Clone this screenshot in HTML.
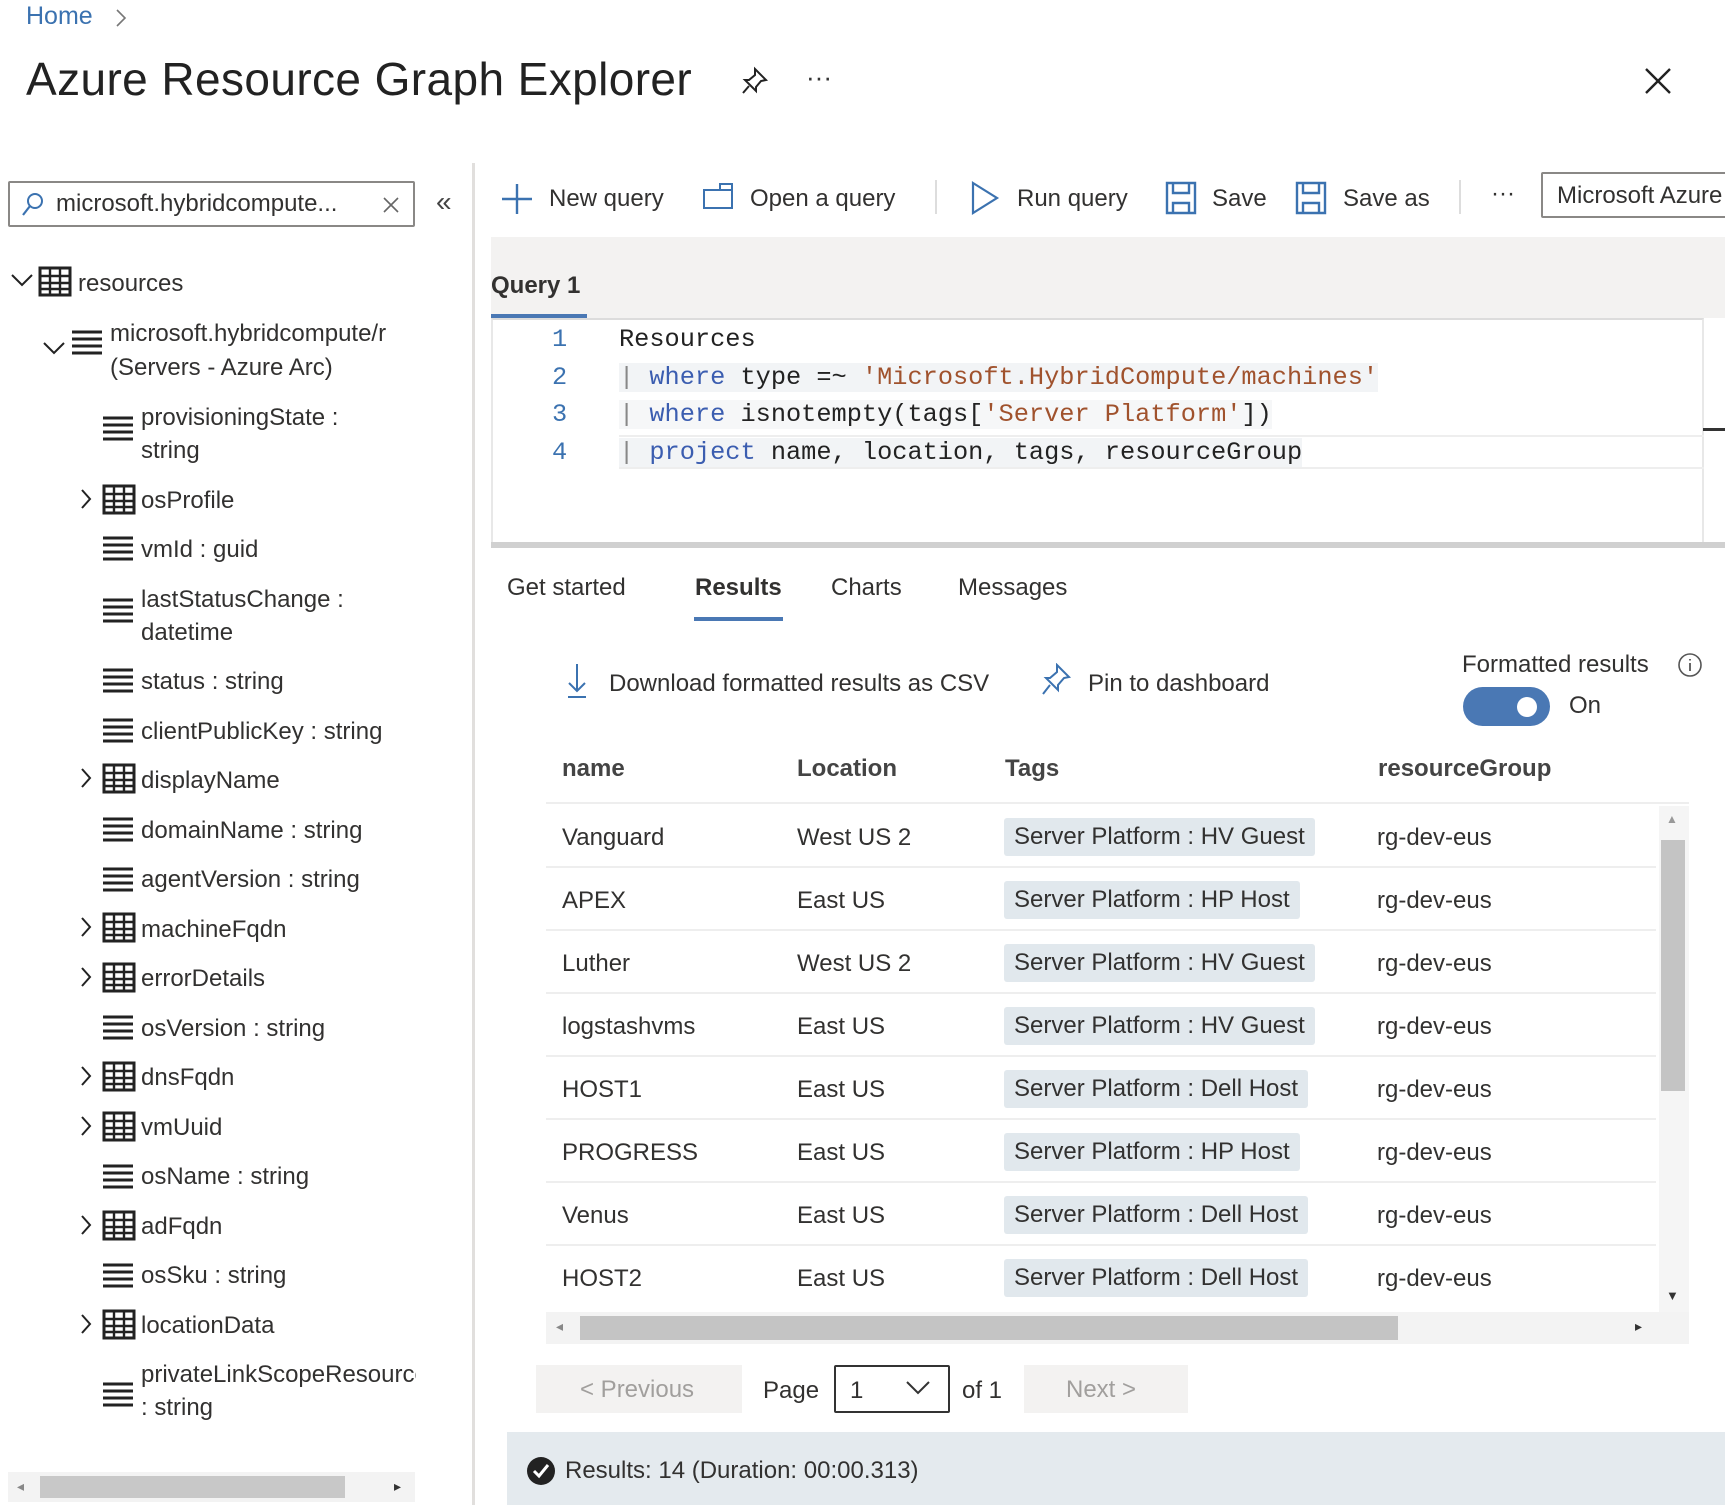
<!DOCTYPE html>
<html><head><meta charset="utf-8"><style>
*{margin:0;padding:0;box-sizing:border-box}
body{width:1725px;height:1505px;position:relative;overflow:hidden;background:#fff;font-family:"Liberation Sans",sans-serif;color:#323130}
.a{position:absolute;white-space:nowrap}
.t{font-size:24px}
.mono{font-family:"Liberation Mono",monospace;font-size:25.3px}
.ico{position:absolute}
.row{position:absolute;left:546px;width:1110px;height:63px;border-bottom:2px solid #eeeeee}
.chip{position:absolute;background:#e1e8ed;border-radius:3px;height:38px;padding:0 10px;line-height:38px;font-size:24px}
</style></head><body>

<div class="a" style="left:26px;top:2px;font-size:25px;color:#3b72b0">Home</div>
<svg class="ico" style="left:114px;top:8px" width="14" height="20"><path d="M3 2 L11 10 L3 18" fill="none" stroke="#777" stroke-width="1.6"/></svg>
<div class="a" style="left:26px;top:52px;font-size:46px;letter-spacing:0.4px;color:#222">Azure Resource Graph Explorer</div>
<svg class="ico" style="left:740px;top:66px" width="30" height="30"><path d="M15 3 L26 14 L21 15 L16 21 L16 25 L5 14 L9 14 L15 9 Z M9 20 L3 27" fill="none" stroke="#222" stroke-width="2"/></svg>
<div class="a" style="left:806px;top:62px;font-size:26px;color:#333">···</div>
<svg class="ico" style="left:1644px;top:67px" width="28" height="28"><path d="M2 2 L26 26 M26 2 L2 26" stroke="#222" stroke-width="2.4"/></svg>

<!-- left panel -->
<div class="a" style="left:8px;top:181px;width:407px;height:46px;border:2px solid #8a8886;border-radius:2px"></div>
<svg class="ico" style="left:20px;top:192px" width="24" height="26"><circle cx="15" cy="9" r="7" fill="none" stroke="#3b72b0" stroke-width="2"/><path d="M10 14 L3 23" stroke="#3b72b0" stroke-width="2.2"/></svg>
<div class="a t" style="left:56px;top:190px">microsoft.hybridcompute...</div>
<svg class="ico" style="left:382px;top:196px" width="18" height="18"><path d="M2 2 L16 16 M16 2 L2 16" stroke="#666" stroke-width="1.6"/></svg>
<div class="a" style="left:436px;top:186px;font-size:28px;color:#444">«</div>
<div class="a" style="left:472px;top:163px;width:3px;height:1342px;background:#e1dfdd"></div>

<svg class="ico" style="left:0;top:260px" width="440" height="1200">
<defs>
<g id="tb"><rect x="0" y="0" width="30" height="27" fill="none" stroke="#222" stroke-width="3"/><path d="M0 8 H30 M0 15 H30 M0 21 H30 M10 0 V27 M20 0 V27" stroke="#222" stroke-width="2.4"/></g>
<g id="ls"><path d="M0 2 H30 M0 9 H30 M0 16 H30 M0 23 H30" stroke="#222" stroke-width="3"/></g>
<path id="cr" d="M0 0 L8 9 L0 18" fill="none" stroke="#222" stroke-width="2"/>
<path id="cd" d="M0 0 L10 10 L20 0" fill="none" stroke="#222" stroke-width="2"/>
</defs>
<use href="#cd" x="12" y="15"/><use href="#tb" x="40" y="8"/>
<use href="#cd" x="44" y="83"/><use href="#ls" x="72" y="70"/>
<use href="#ls" x="103" y="156"/>
<use href="#cr" x="82" y="230"/><use href="#tb" x="104" y="226"/>
<use href="#ls" x="103" y="276"/>
<use href="#ls" x="103" y="338"/>
<use href="#ls" x="103" y="408"/>
<use href="#ls" x="103" y="458"/>
<use href="#cr" x="82" y="509"/><use href="#tb" x="104" y="505"/>
<use href="#ls" x="103" y="557"/>
<use href="#ls" x="103" y="607"/>
<use href="#cr" x="82" y="658"/><use href="#tb" x="104" y="654"/>
<use href="#cr" x="82" y="708"/><use href="#tb" x="104" y="704"/>
<use href="#ls" x="103" y="755"/>
<use href="#cr" x="82" y="807"/><use href="#tb" x="104" y="803"/>
<use href="#cr" x="82" y="857"/><use href="#tb" x="104" y="853"/>
<use href="#ls" x="103" y="904"/>
<use href="#cr" x="82" y="956"/><use href="#tb" x="104" y="952"/>
<use href="#ls" x="103" y="1003"/>
<use href="#cr" x="82" y="1055"/><use href="#tb" x="104" y="1051"/>
<use href="#ls" x="103" y="1122"/>
</svg>
<div class="a t" style="left:78px;top:270px">resources</div>
<div class="a t" style="left:110px;top:320px">microsoft.hybridcompute/r</div>
<div class="a t" style="left:110px;top:354px">(Servers - Azure Arc)</div>
<div class="a t" style="left:141px;top:404px">provisioningState :</div>
<div class="a t" style="left:141px;top:437px">string</div>
<div class="a t" style="left:141px;top:487px">osProfile</div>
<div class="a t" style="left:141px;top:536px">vmId : guid</div>
<div class="a t" style="left:141px;top:586px">lastStatusChange :</div>
<div class="a t" style="left:141px;top:619px">datetime</div>
<div class="a t" style="left:141px;top:668px">status : string</div>
<div class="a t" style="left:141px;top:718px">clientPublicKey : string</div>
<div class="a t" style="left:141px;top:767px">displayName</div>
<div class="a t" style="left:141px;top:817px">domainName : string</div>
<div class="a t" style="left:141px;top:866px">agentVersion : string</div>
<div class="a t" style="left:141px;top:916px">machineFqdn</div>
<div class="a t" style="left:141px;top:965px">errorDetails</div>
<div class="a t" style="left:141px;top:1015px">osVersion : string</div>
<div class="a t" style="left:141px;top:1064px">dnsFqdn</div>
<div class="a t" style="left:141px;top:1114px">vmUuid</div>
<div class="a t" style="left:141px;top:1163px">osName : string</div>
<div class="a t" style="left:141px;top:1213px">adFqdn</div>
<div class="a t" style="left:141px;top:1262px">osSku : string</div>
<div class="a t" style="left:141px;top:1312px">locationData</div>
<div class="a t" style="left:141px;top:1361px;width:275px;overflow:hidden">privateLinkScopeResource</div>
<div class="a t" style="left:141px;top:1394px">: string</div>
<div class="a" style="left:8px;top:1472px;width:407px;height:30px;background:#f3f3f3"></div>
<div class="a" style="left:40px;top:1476px;width:305px;height:22px;background:#c8c8c8"></div>
<div class="a" style="left:17px;top:1478px;font-size:14px;color:#888">◂</div>
<div class="a" style="left:394px;top:1478px;font-size:14px;color:#333">▸</div>

<!-- toolbar -->
<svg class="ico" style="left:501px;top:183px" width="32" height="32"><path d="M16 1 V31 M1 16 H31" stroke="#3b72b0" stroke-width="2.4"/></svg>
<div class="a t" style="left:549px;top:185px">New query</div>
<svg class="ico" style="left:702px;top:182px" width="32" height="28"><path d="M2 8 H30 V26 H2 Z M18 8 V2 H30 V8" fill="none" stroke="#3b72b0" stroke-width="2"/></svg>
<div class="a t" style="left:750px;top:185px">Open a query</div>
<div class="a" style="left:935px;top:180px;width:2px;height:34px;background:#ddd"></div>
<svg class="ico" style="left:970px;top:181px" width="30" height="34"><path d="M3 2 L27 17 L3 32 Z" fill="none" stroke="#3b72b0" stroke-width="2.2"/></svg>
<div class="a t" style="left:1017px;top:185px">Run query</div>
<svg class="ico" style="left:1165px;top:181px" width="32" height="34"><path d="M2 2 H30 V32 H2 Z M8 2 V12 H24 V2 M8 32 V22 H24 V32" fill="none" stroke="#3b72b0" stroke-width="2.4"/></svg>
<div class="a t" style="left:1212px;top:185px">Save</div>
<svg class="ico" style="left:1295px;top:181px" width="32" height="34"><path d="M2 2 H30 V32 H2 Z M8 2 V12 H24 V2 M8 32 V22 H24 V32" fill="none" stroke="#3b72b0" stroke-width="2.4"/></svg>
<div class="a t" style="left:1343px;top:185px">Save as</div>
<div class="a" style="left:1459px;top:180px;width:2px;height:34px;background:#ddd"></div>
<div class="a" style="left:1491px;top:180px;font-size:24px">···</div>
<div class="a" style="left:1541px;top:172px;width:190px;height:46px;border:2px solid #8a8886;border-radius:2px"></div>
<div class="a t" style="left:1557px;top:182px">Microsoft Azure</div>

<!-- query area -->
<div class="a" style="left:491px;top:237px;width:1234px;height:81px;background:#f3f2f1"></div>
<div class="a t" style="left:491px;top:272px;font-weight:bold;color:#323130">Query 1</div>
<div class="a" style="left:491px;top:314px;width:96px;height:4px;background:#4a78b4"></div>
<div class="a" style="left:491px;top:318px;width:1213px;height:226px;border:2px solid #e8e8e8;border-top:2px solid #dcdcdc;background:#fff"></div>
<div class="a" style="left:491px;top:542px;width:1234px;height:6px;background:#d0d0d0"></div>
<div class="a" style="left:619px;top:435px;width:1085px;height:34px;border-top:2px solid #eee;border-bottom:2px solid #eee"></div>
<div class="a" style="left:1703px;top:428px;width:22px;height:3px;background:#333"></div>
<div class="a mono" style="left:552px;top:325px;color:#3b72b0">1</div>
<div class="a mono" style="left:552px;top:363px;color:#3b72b0">2</div>
<div class="a mono" style="left:552px;top:400px;color:#3b72b0">3</div>
<div class="a mono" style="left:552px;top:438px;color:#3b72b0">4</div>
<div class="a mono" style="left:619px;top:325px;color:#222">Resources</div>
<div class="a mono" style="left:619px;top:363px;color:#222;background:#f2f4f6"><span style="color:#888">|</span> <span style="color:#3b5db0">where</span> type =~ <span style="color:#a0522d">'Microsoft.HybridCompute/machines'</span></div>
<div class="a mono" style="left:619px;top:400px;color:#222;background:#f6f7f8"><span style="color:#888">|</span> <span style="color:#3b5db0">where</span> isnotempty(tags[<span style="color:#a0522d">'Server Platform'</span>])</div>
<div class="a mono" style="left:619px;top:438px;color:#222;background:#f2f4f6"><span style="color:#888">|</span> <span style="color:#3b5db0">project</span> name, location, tags, resourceGroup</div>

<!-- tabs -->
<div class="a t" style="left:507px;top:574px">Get started</div>
<div class="a t" style="left:695px;top:574px;font-weight:bold">Results</div>
<div class="a" style="left:694px;top:617px;width:89px;height:4px;background:#4a78b4"></div>
<div class="a t" style="left:831px;top:574px">Charts</div>
<div class="a t" style="left:958px;top:574px">Messages</div>

<svg class="ico" style="left:565px;top:663px" width="24" height="36"><path d="M12 1 V28 M4 20 L12 28 L20 20 M3 34 H21" fill="none" stroke="#3b72b0" stroke-width="2"/></svg>
<div class="a t" style="left:609px;top:670px">Download formatted results as CSV</div>
<svg class="ico" style="left:1040px;top:663px" width="32" height="34"><path d="M17 2 L29 14 L24 15 L18 22 L18 27 L6 15 L10 15 L17 9 Z M10 22 L3 31" fill="none" stroke="#3b72b0" stroke-width="2"/></svg>
<div class="a t" style="left:1088px;top:670px">Pin to dashboard</div>
<div class="a t" style="left:1462px;top:651px">Formatted results</div>
<svg class="ico" style="left:1677px;top:652px" width="26" height="26"><circle cx="13" cy="13" r="11" fill="none" stroke="#555" stroke-width="1.6"/><path d="M13 11 V19 M13 7 V8.5" stroke="#555" stroke-width="1.8"/></svg>
<div class="a" style="left:1463px;top:687px;width:87px;height:39px;border-radius:20px;background:#4a78b4"></div>
<div class="a" style="left:1517px;top:697px;width:20px;height:20px;border-radius:10px;background:#fff"></div>
<div class="a t" style="left:1569px;top:692px">On</div>

<!-- table -->
<div class="a t" style="left:562px;top:755px;font-weight:bold;color:#444">name</div>
<div class="a t" style="left:797px;top:755px;font-weight:bold;color:#444">Location</div>
<div class="a t" style="left:1005px;top:755px;font-weight:bold;color:#444">Tags</div>
<div class="a t" style="left:1378px;top:755px;font-weight:bold;color:#444">resourceGroup</div>
<div class="a" style="left:546px;top:802px;width:1143px;height:2px;background:#eee"></div>

<div class="row" style="top:805px"></div>
<div class="row" style="top:868px"></div>
<div class="row" style="top:931px"></div>
<div class="row" style="top:994px"></div>
<div class="row" style="top:1057px"></div>
<div class="row" style="top:1120px"></div>
<div class="row" style="top:1183px"></div>

<div class="a t" style="left:562px;top:824px">Vanguard</div><div class="a t" style="left:797px;top:824px">West US 2</div><div class="chip" style="left:1004px;top:818px">Server Platform : HV Guest</div><div class="a t" style="left:1377px;top:824px">rg-dev-eus</div>
<div class="a t" style="left:562px;top:887px">APEX</div><div class="a t" style="left:797px;top:887px">East US</div><div class="chip" style="left:1004px;top:881px">Server Platform : HP Host</div><div class="a t" style="left:1377px;top:887px">rg-dev-eus</div>
<div class="a t" style="left:562px;top:950px">Luther</div><div class="a t" style="left:797px;top:950px">West US 2</div><div class="chip" style="left:1004px;top:944px">Server Platform : HV Guest</div><div class="a t" style="left:1377px;top:950px">rg-dev-eus</div>
<div class="a t" style="left:562px;top:1013px">logstashvms</div><div class="a t" style="left:797px;top:1013px">East US</div><div class="chip" style="left:1004px;top:1007px">Server Platform : HV Guest</div><div class="a t" style="left:1377px;top:1013px">rg-dev-eus</div>
<div class="a t" style="left:562px;top:1076px">HOST1</div><div class="a t" style="left:797px;top:1076px">East US</div><div class="chip" style="left:1004px;top:1070px">Server Platform : Dell Host</div><div class="a t" style="left:1377px;top:1076px">rg-dev-eus</div>
<div class="a t" style="left:562px;top:1139px">PROGRESS</div><div class="a t" style="left:797px;top:1139px">East US</div><div class="chip" style="left:1004px;top:1133px">Server Platform : HP Host</div><div class="a t" style="left:1377px;top:1139px">rg-dev-eus</div>
<div class="a t" style="left:562px;top:1202px">Venus</div><div class="a t" style="left:797px;top:1202px">East US</div><div class="chip" style="left:1004px;top:1196px">Server Platform : Dell Host</div><div class="a t" style="left:1377px;top:1202px">rg-dev-eus</div>
<div class="a t" style="left:562px;top:1265px">HOST2</div><div class="a t" style="left:797px;top:1265px">East US</div><div class="chip" style="left:1004px;top:1259px">Server Platform : Dell Host</div><div class="a t" style="left:1377px;top:1265px">rg-dev-eus</div>

<!-- scrollbars -->
<div class="a" style="left:1659px;top:806px;width:30px;height:508px;background:#f5f5f5"></div>
<div class="a" style="left:1661px;top:840px;width:24px;height:251px;background:#c4c4c4"></div>
<div class="a" style="left:1666px;top:812px;font-size:12px;color:#999">▲</div>
<div class="a" style="left:1666px;top:1288px;font-size:13px;color:#333">▼</div>
<div class="a" style="left:546px;top:1312px;width:1143px;height:32px;background:#f3f3f3"></div>
<div class="a" style="left:580px;top:1316px;width:818px;height:24px;background:#c4c4c4"></div>
<div class="a" style="left:556px;top:1318px;font-size:14px;color:#888">◂</div>
<div class="a" style="left:1635px;top:1318px;font-size:14px;color:#333">▸</div>

<!-- pagination -->
<div class="a" style="left:536px;top:1365px;width:206px;height:48px;background:#f3f2f1"></div>
<div class="a t" style="left:580px;top:1376px;color:#a19f9d">&lt; Previous</div>
<div class="a t" style="left:763px;top:1377px">Page</div>
<div class="a" style="left:834px;top:1365px;width:116px;height:48px;border:2px solid #333;border-radius:2px"></div>
<div class="a t" style="left:850px;top:1377px">1</div>
<svg class="ico" style="left:905px;top:1380px" width="26" height="16"><path d="M2 2 L13 13 L24 2" fill="none" stroke="#333" stroke-width="2"/></svg>
<div class="a t" style="left:962px;top:1377px">of 1</div>
<div class="a" style="left:1024px;top:1365px;width:164px;height:48px;background:#f3f2f1"></div>
<div class="a t" style="left:1066px;top:1376px;color:#a19f9d">Next &gt;</div>

<!-- status -->
<div class="a" style="left:507px;top:1432px;width:1218px;height:73px;background:#e4eaee"></div>
<svg class="ico" style="left:526px;top:1456px" width="30" height="30"><circle cx="15" cy="15" r="14" fill="#222"/><path d="M8 15 L13 20 L22 9" fill="none" stroke="#fff" stroke-width="3"/></svg>
<div class="a t" style="left:565px;top:1457px">Results: 14 (Duration: 00:00.313)</div>
</body></html>
